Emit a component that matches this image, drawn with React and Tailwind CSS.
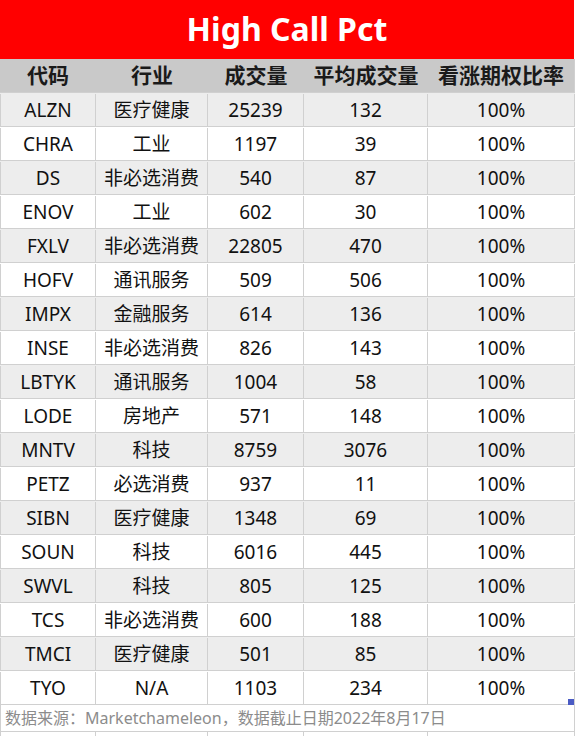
import React from "react";

const rows = [
  ["ALZN", "医疗健康", "25239", "132"],
  ["CHRA", "工业", "1197", "39"],
  ["DS", "非必选消费", "540", "87"],
  ["ENOV", "工业", "602", "30"],
  ["FXLV", "非必选消费", "22805", "470"],
  ["HOFV", "通讯服务", "509", "506"],
  ["IMPX", "金融服务", "614", "136"],
  ["INSE", "非必选消费", "826", "143"],
  ["LBTYK", "通讯服务", "1004", "58"],
  ["LODE", "房地产", "571", "148"],
  ["MNTV", "科技", "8759", "3076"],
  ["PETZ", "必选消费", "937", "11"],
  ["SIBN", "医疗健康", "1348", "69"],
  ["SOUN", "科技", "6016", "445"],
  ["SWVL", "科技", "805", "125"],
  ["TCS", "非必选消费", "600", "188"],
  ["TMCI", "医疗健康", "501", "85"],
  ["TYO", "N/A", "1103", "234"],
];

const font = { fontFamily: '"Noto Sans", "Noto Sans CJK SC", sans-serif' };

export default function App() {
  return (
    <div className="w-[577px] h-[736px] overflow-hidden bg-white text-[#111]" style={font}>
      <div className="w-[574px] h-[59px] bg-[#ff0000] flex items-center justify-center text-white font-bold text-[32px] leading-none pb-[2px]">
        High Call Pct
      </div>
      <div className="flex h-[34px] w-[575px] bg-[#c9c9c9] border-b border-[#d0d0d0] border-r font-bold text-[21px] leading-none text-[#1a1a1a]">
        <div className="w-[96px] flex items-center justify-center">代码</div>
        <div className="w-[112px] flex items-center justify-center">行业</div>
        <div className="w-[96px] flex items-center justify-center">成交量</div>
        <div className="w-[124px] flex items-center justify-center">平均成交量</div>
        <div className="w-[146px] flex items-center justify-center">看涨期权比率</div>
      </div>
      {rows.map((r, i) => (
        <div
          key={r[0]}
          className={`relative flex h-[34px] w-[575px] border-b border-[#d0d0d0] text-[19px] leading-none pt-[1px] ${i % 2 === 0 ? "bg-[#ededed]" : "bg-white"}`}
        >
          <div className="w-[96px] border-l border-r border-[#d0d0d0] flex items-center justify-center">{r[0]}</div>
          <div className="w-[112px] border-r border-[#d0d0d0] flex items-center justify-center">{r[1]}</div>
          <div className="w-[96px] border-r border-[#d0d0d0] flex items-center justify-center">{r[2]}</div>
          <div className="w-[124px] border-r border-[#d0d0d0] flex items-center justify-center">{r[3]}</div>
          <div className="w-[147px] border-r border-[#d0d0d0] flex items-center justify-center">100%</div>
          {i === rows.length - 1 && (
            <div className="absolute right-[1px] bottom-[-1px] w-[6px] h-[6px] bg-[#4a5bc4]" />
          )}
        </div>
      ))}
      <div className="flex items-center h-[27px] w-[575px] border-l border-r border-b border-[#d0d0d0] pl-[4px] text-[16px] leading-none text-[#8c8c8c]">
        数据来源：Marketchameleon，数据截止日期2022年8月17日
      </div>
      <div className="flex h-[10px] w-[575px]">
        <div className="w-[96px] border-l border-r border-[#d0d0d0]" />
        <div className="w-[112px] border-r border-[#d0d0d0]" />
        <div className="w-[96px] border-r border-[#d0d0d0]" />
        <div className="w-[124px] border-r border-[#d0d0d0]" />
        <div className="w-[147px] border-r border-[#d0d0d0]" />
      </div>
    </div>
  );
}
